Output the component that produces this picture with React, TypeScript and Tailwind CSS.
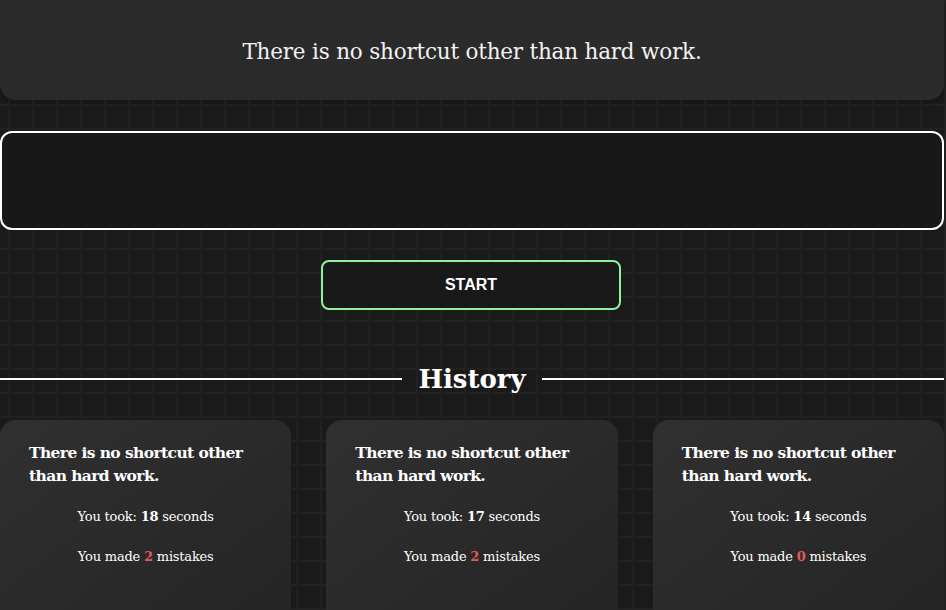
const history = [
  { text: "There is no shortcut other than hard work.", seconds: 18, mistakes: 2 },
  { text: "There is no shortcut other than hard work.", seconds: 17, mistakes: 2 },
  { text: "There is no shortcut other than hard work.", seconds: 14, mistakes: 0 },
];

const slab = "font-['DejaVu_Serif',serif]";

export default function App() {
  return (
    <div
      className={`min-h-screen w-full overflow-hidden bg-[#1a1a1a] bg-[linear-gradient(to_right,#212121_2px,transparent_2px),linear-gradient(to_bottom,#212121_2px,transparent_2px)] bg-[size:24px_24px] bg-[position:8px_8px] text-white ${slab}`}
    >
      <div className="flex w-[944px] flex-col">
        <div className="flex h-[100px] items-center justify-center rounded-b-2xl bg-gradient-to-r from-[#2a2a2a] to-[#2b2b2b] pt-[4px] shadow-md">
          <p className="text-[21.5px] tracking-[-0.2px] text-[#f2f2f2]">
            There is no shortcut other than hard work.
          </p>
        </div>

        <textarea className="mt-[31px] h-[99px] w-full resize-none rounded-xl border-2 border-white bg-[#181818] outline-none" />

        <div className="mt-[30px] flex justify-center">
          <button className="-ml-[2px] h-[50px] w-[300px] rounded-lg border-2 border-[#8ff09e] bg-[#191919] font-['Liberation_Sans',sans-serif] text-[16px] font-bold text-white">
            START
          </button>
        </div>

        <div className="mt-[56px] flex items-center">
          <div className="h-[2px] flex-1 bg-white" />
          <h2 className="px-[16px] text-[26px] leading-none font-bold">History</h2>
          <div className="h-[2px] flex-1 bg-white" />
        </div>

        <div className="mt-[28px] grid grid-cols-3 gap-[35px]">
          {history.map((item, i) => (
            <div
              key={i}
              className="h-[220px] rounded-2xl bg-gradient-to-br from-[#303030] to-[#242424] px-[29px] pt-[21px]"
            >
              <h3 className="text-[15.5px] leading-[23px] font-bold tracking-[-0.6px]">{item.text}</h3>
              <p className="mt-[20px] text-center text-[13px] tracking-[-0.2px]">
                You took: <span className="font-bold">{item.seconds}</span> seconds
              </p>
              <p className="mt-[20px] text-center text-[13px] tracking-[-0.2px]">
                You made <span className="font-bold text-[#e05a5a]">{item.mistakes}</span> mistakes
              </p>
            </div>
          ))}
        </div>
      </div>
    </div>
  );
}
